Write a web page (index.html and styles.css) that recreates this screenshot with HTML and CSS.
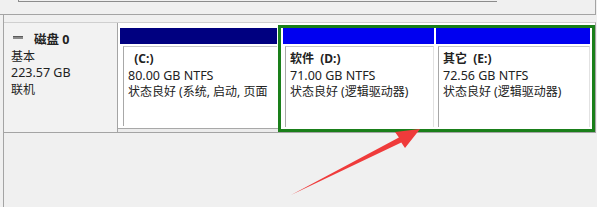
FILE: index.html
```html
<!DOCTYPE html>
<html lang="zh-CN">
<head>
<meta charset="utf-8">
<title>磁盘管理</title>
<link rel="stylesheet" href="styles.css">
</head>
<body>
<div class="top"><div class="thumb"></div></div>
<div class="main">
  <div class="disk">
    <div class="label">
      <div class="title"><svg class="icon" width="10" height="4" viewBox="0 0 10 4"><rect x="0" y="0" width="10" height="3" fill="#8a8a8a"/><rect x="0" y="0" width="10" height="1" fill="#5a5a5a"/></svg><b>磁盘 0</b></div>
      <div>基本</div>
      <div class="size">223.57 GB</div>
      <div>联机</div>
    </div>
    <div class="area">
      <div class="cframe">
        <div class="cinner">
          <div class="part c">
            <div class="bar primary"></div>
            <div class="box cbox">
              <div class="name">&nbsp;&nbsp;(C:)</div>
              <div class="size">80.00 GB NTFS</div>
              <div>状态良好 (系统, 启动, 页面</div>
            </div>
          </div>
        </div>
      </div>
      <div class="ext">
        <div class="part d">
          <div class="bar logical"></div>
          <div class="box">
            <div class="name">软件&nbsp;&nbsp;(D:)</div>
            <div class="size">71.00 GB NTFS</div>
            <div>状态良好 (逻辑驱动器)</div>
          </div>
        </div>
        <div class="part e">
          <div class="bar logical"></div>
          <div class="box">
            <div class="name">其它&nbsp;&nbsp;(E:)</div>
            <div class="size">72.56 GB NTFS</div>
            <div>状态良好 (逻辑驱动器)</div>
          </div>
        </div>
      </div>
    </div>
  </div>
</div>
<svg class="arrow" width="597" height="207" viewBox="0 0 597 207">
  <polygon points="291,195 398.9,137.6 395,132 420,129 405,148 401.3,142.4" fill="#ef3b3b"/>
</svg>
</body>
</html>
```

FILE: styles.css
```css
html, body {
  margin: 0;
  padding: 0;
}
body {
  background: #f0f0f0;
  font-family: "Noto Sans", "Noto Sans CJK SC", sans-serif;
  font-size: 12px;
  color: #222;
  width: 597px;
  height: 207px;
  overflow: hidden;
  position: relative;
}
.top {
  width: 595px;
  height: 14px;
  border-right: 1px solid #a4a4a4;
  border-bottom: 1px solid #a4a4a4;
}
.thumb {
  margin-left: 18px;
  width: 478px;
  height: 1px;
  border-left: 1px solid #8c8c8c;
  border-bottom: 1px solid #8c8c8c;
}
.main {
  margin-left: 3px;
  border-left: 1px solid #a4a4a4;
  height: 192px;
  padding-top: 7px;
}
.disk {
  display: flex;
  width: 591px;
  height: 109px;
  border-top: 1px solid #cfcfcf;
  border-bottom: 1px solid #a4a4a4;
  border-right: 1px solid #a4a4a4;
}
.label {
  width: 106px;
  padding: 9px 0 0 7px;
  border-right: 1px solid #a4a4a4;
  line-height: 16.5px;
  background: #f2f2f2;
}
.title b {
  font-weight: 700;
  font-size: 12.5px;
}
.icon {
  display: inline-block;
  vertical-align: 4px;
  margin: 0 11px 0 2px;
}
.size {
  font-size: 12.5px;
}
.area {
  display: flex;
  width: 477px;
  padding-top: 2px;
  background: #fff;
}
.cframe {
  width: 160px;
  display: flex;
  flex-direction: column;
  background: #ececec;
}
.cinner {
  flex: 1;
  display: flex;
  flex-direction: column;
  background: #fff;
  border-bottom: 1px solid #a8a8a8;
  margin-bottom: 3px;
  padding: 3px 1px 0 2px;
}
.part {
  display: flex;
  flex-direction: column;
  min-width: 0;
}
.c {
  flex: 1;
}
.bar {
  height: 16px;
  flex: none;
}
.primary {
  background: #000080;
}
.logical {
  background: #0000f0;
}
.box {
  flex: 1;
  margin: 2px 0 2px 2px;
  border-top: 1px solid #c6c6c6;
  border-left: 1px solid #a8a8a8;
  border-right: 1px solid #e2e2e2;
  padding: 4px 0 0 4px;
  overflow: hidden;
  white-space: nowrap;
  line-height: 16.5px;
}
.cbox {
  margin-left: 3px;
  border-right: none;
}
.name {
  font-weight: 700;
}
.ext {
  width: 307px;
  display: flex;
  gap: 2px;
  padding: 0 2px;
  border: 3px solid #1a7f1a;
}
.d {
  width: 151px;
  flex: none;
}
.e {
  flex: 1;
}
.arrow {
  position: absolute;
  left: 0;
  top: 0;
  pointer-events: none;
}
```
